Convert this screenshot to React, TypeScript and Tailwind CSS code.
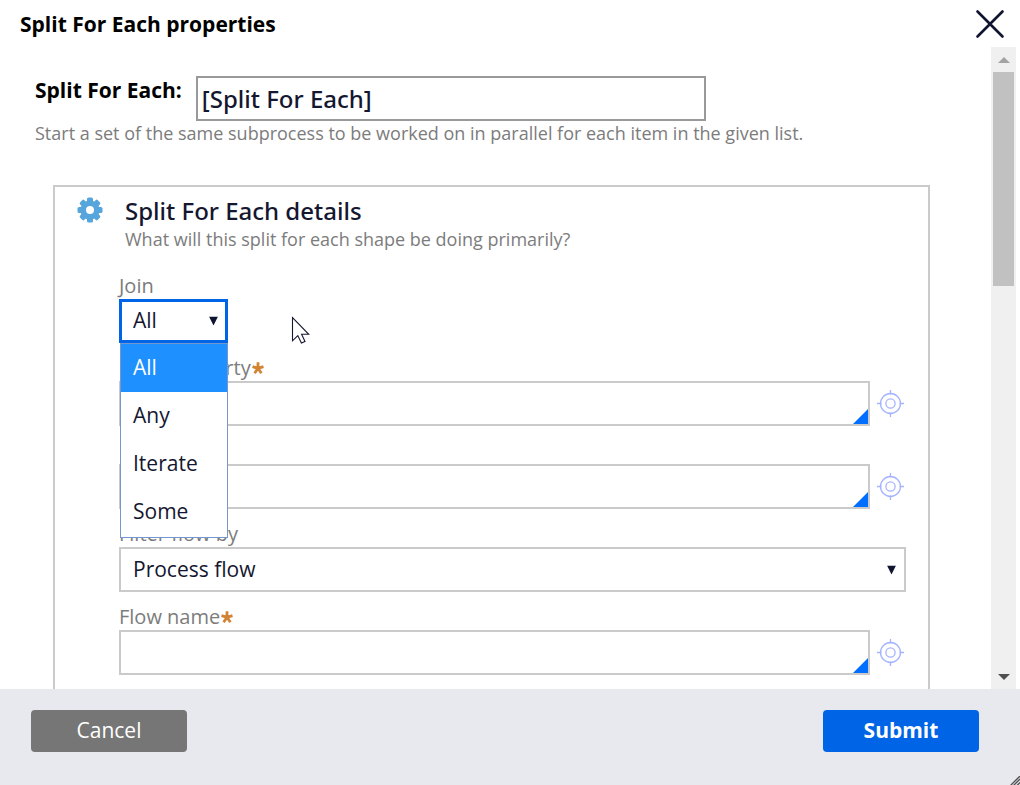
import React, { useState } from 'react';

const JOIN_OPTIONS = ['All', 'Any', 'Iterate', 'Some'];

const GearIcon = () => (
  <svg viewBox="0 0 26 26" className="w-[26px] h-[26px]" aria-hidden="true">
    <g fill="#56a5dc">
      {[0, 45, 90, 135].map((angle) => (
        <rect key={angle} x="10" y="0.5" width="6" height="25" rx="1.6" transform={`rotate(${angle} 13 13)`} />
      ))}
      <circle cx="13" cy="13" r="9.6" />
    </g>
    <circle cx="13" cy="13" r="4" fill="#fff" />
  </svg>
);

const TargetIcon = () => (
  <svg viewBox="0 0 27 27" className="w-[27px] h-[27px]" fill="none" stroke="#a6b4ff" strokeWidth="1.3" aria-hidden="true">
    <circle cx="13.5" cy="13.5" r="10" />
    <circle cx="13.5" cy="13.5" r="4.6" />
    <path d="M13.5 0v4.5M13.5 22.5V27M0 13.5h4.5M22.5 13.5H27" />
  </svg>
);

const RequiredIcon = () => (
  <svg viewBox="0 0 12 12" className="w-3 h-3 ml-px" stroke="#d28434" strokeWidth="2.8" aria-hidden="true">
    <path d="M6 6.3V0.3M6 6.3L0.5 4.6M6 6.3L11.5 4.6M6 6.3L2.6 11.2M6 6.3L9.4 11.2" />
  </svg>
);

const SelectArrow = () => (
  <svg viewBox="0 0 9 9" className="absolute right-2.5 top-1/2 -translate-y-1/2 w-[9px] h-[9px] pointer-events-none" aria-hidden="true">
    <path d="M0 0h9L4.5 9z" fill="#0f1430" />
  </svg>
);

interface LookupFieldProps {
  id: string;
  label?: string;
  required?: boolean;
}

const LookupField: React.FC<LookupFieldProps> = ({ id, label, required }) => (
  <div>
    <div className="flex items-center h-[26px]">
      {label && <label htmlFor={id} className="text-[20px] leading-[26px] text-[#7c7c7c]">{label}</label>}
      {required && <RequiredIcon />}
    </div>
    <div className="flex items-center gap-[5px]">
      <div className="relative flex-1">
        <input
          id={id}
          type="text"
          aria-label={label ? undefined : 'Class'}
          className="block w-full h-[45px] px-3 border-2 border-[#cacaca] bg-white text-[21px] text-[#14172f] outline-none"
        />
        <svg viewBox="0 0 15 15" className="absolute right-0.5 bottom-0.5 w-[15px] h-[15px]" aria-hidden="true">
          <path d="M15 0v15H0z" fill="#006eff" />
        </svg>
      </div>
      <button type="button" aria-label="Open rule" className="w-[31px] h-[30px] flex items-center justify-center">
        <TargetIcon />
      </button>
    </div>
  </div>
);

const App: React.FC = () => {
  const [name, setName] = useState('[Split For Each]');
  const [join, setJoin] = useState('All');
  const [menuOpen, setMenuOpen] = useState(true);

  const pickJoin = (option: string) => {
    setJoin(option);
    setMenuOpen(false);
  };

  return (
    <div className="relative h-screen flex flex-col overflow-hidden bg-white font-['Open_Sans',sans-serif]">
      <header className="h-[47px] shrink-0 flex items-center justify-between pl-5 pr-[15px]">
        <h1 className="text-[21px] leading-7 font-bold text-black">Split For Each properties</h1>
        <button type="button" aria-label="Close" className="w-[30px] h-[30px]">
          <svg viewBox="0 0 30 30" className="w-[30px] h-[30px]" stroke="#0f1430" strokeWidth="2.6" strokeLinecap="round">
            <path d="M2.5 2.5l25 25M27.5 2.5l-25 25" />
          </svg>
        </button>
      </header>

      <div className="flex-1 min-h-0 flex pr-1">
        <main className="flex-1 min-w-0 flex flex-col overflow-hidden pt-[29px] pl-[35px] pr-[61px]">
          <div className="flex items-start gap-3.5">
            <label htmlFor="shape-name" className="text-[21px] leading-7 font-bold text-black">Split For Each:</label>
            <input
              id="shape-name"
              type="text"
              value={name}
              onChange={(e) => setName(e.target.value)}
              className="w-[510px] h-[45px] px-1 border-2 border-[#999999] font-['Noto_Sans',sans-serif] text-[24px] font-medium text-[#14172f] outline-none"
            />
          </div>
          <p className="text-[18px] leading-6 text-[#7c7c7c]">
            Start a set of the same subprocess to be worked on in parallel for each item in the given list.
          </p>

          <section className="flex-1 mt-10 ml-[18px] border-2 border-b-0 border-[#cacaca] pl-16 pr-[22px]">
            <div className="relative pl-1.5 pt-2">
              <div className="absolute -left-[42px] top-[10px]">
                <GearIcon />
              </div>
              <h2 className="font-['Noto_Sans',sans-serif] text-[24px] leading-8 font-medium text-[#14172f]">Split For Each details</h2>
              <p className="text-[18px] leading-6 text-[#7c7c7c]">What will this split for each shape be doing primarily?</p>
            </div>

            <form className="flex flex-col gap-3 pt-[22px]">
              <div>
                <label htmlFor="join" className="block text-[20px] leading-[26px] text-[#7c7c7c]">Join</label>
                <div className="relative w-[109px]">
                  <select
                    id="join"
                    value={join}
                    onMouseDown={(e) => {
                      e.preventDefault();
                      setMenuOpen(!menuOpen);
                    }}
                    onChange={(e) => setJoin(e.target.value)}
                    className="block w-full h-[44px] pl-[11px] border-3 border-[#0064e6] appearance-none bg-white text-[21px] text-[#14172f] outline-none"
                  >
                    {JOIN_OPTIONS.map((option) => (
                      <option key={option}>{option}</option>
                    ))}
                  </select>
                  <SelectArrow />
                  {menuOpen && (
                    <ul role="listbox" aria-label="Join" className="absolute top-full left-px right-0 z-10 pb-px bg-white border border-[#7596cf]">
                      {JOIN_OPTIONS.map((option) => (
                        <li
                          key={option}
                          role="option"
                          aria-selected={option === join}
                          onClick={() => pickJoin(option)}
                          className={`h-12 px-3 flex items-center text-[21px] cursor-default ${
                            option === join ? 'bg-[#1e90ff] text-white' : 'text-[#14172f]'
                          }`}
                        >
                          {option}
                        </li>
                      ))}
                    </ul>
                  )}
                </div>
              </div>

              <LookupField id="page-property" label="Page property" required />
              <LookupField id="class" />

              <div>
                <label htmlFor="filter" className="block text-[20px] leading-[26px] text-[#7c7c7c]">Filter flow by</label>
                <div className="relative">
                  <select
                    id="filter"
                    className="block w-full h-[45px] pl-3 border-2 border-[#cacaca] appearance-none bg-white text-[21px] text-[#14172f] outline-none"
                  >
                    <option>Process flow</option>
                  </select>
                  <SelectArrow />
                </div>
              </div>

              <LookupField id="flow-name" label="Flow name" required />
            </form>
          </section>
        </main>

        {/* Scrollbar */}
        <div className="w-[25px] flex flex-col items-center bg-[#f0f0f0]">
          <div className="h-[25px] flex items-center">
            <svg viewBox="0 0 12 6" className="w-3 h-1.5" aria-hidden="true">
              <path d="M6 0l6 6H0z" fill="#a3a3a3" />
            </svg>
          </div>
          <div className="w-[21px] h-1/3 bg-[#c1c1c1]" />
          <div className="mt-auto h-[25px] flex items-center">
            <svg viewBox="0 0 12 6" className="w-3 h-1.5" aria-hidden="true">
              <path d="M0 0h12L6 6z" fill="#505050" />
            </svg>
          </div>
        </div>
      </div>

      <footer className="relative h-24 shrink-0 flex items-start justify-between pt-[21px] pl-[31px] pr-[41px] bg-[#e8e9ef]">
        <button type="button" className="w-[156px] h-[42px] rounded-[4px] bg-[#767676] text-[21px] font-medium text-white">
          Cancel
        </button>
        <button type="button" className="w-[156px] h-[42px] rounded-[4px] bg-[#0064e6] text-[21px] font-bold text-white">
          Submit
        </button>
        <svg viewBox="0 0 10 9" className="absolute right-0 bottom-0 w-[10px] h-[9px]" stroke="#505050" strokeWidth="1.3" aria-hidden="true">
          <path d="M0.5 9.5L10 0M3.5 9.5L10 3M7 9.5l3-3" />
        </svg>
      </footer>

      {/* Mouse pointer */}
      <svg viewBox="0 0 19 28" className="absolute left-[291px] top-[316px] z-20 w-[19px] h-7 pointer-events-none" aria-hidden="true">
        <path d="M1.5 1.5v23.3l5.3-5.2 3.6 7.4 3.6-1.6-3.4-7.1h7.2z" fill="#fff" stroke="#14172f" strokeWidth="1.1" />
      </svg>
    </div>
  );
};

export default App;
